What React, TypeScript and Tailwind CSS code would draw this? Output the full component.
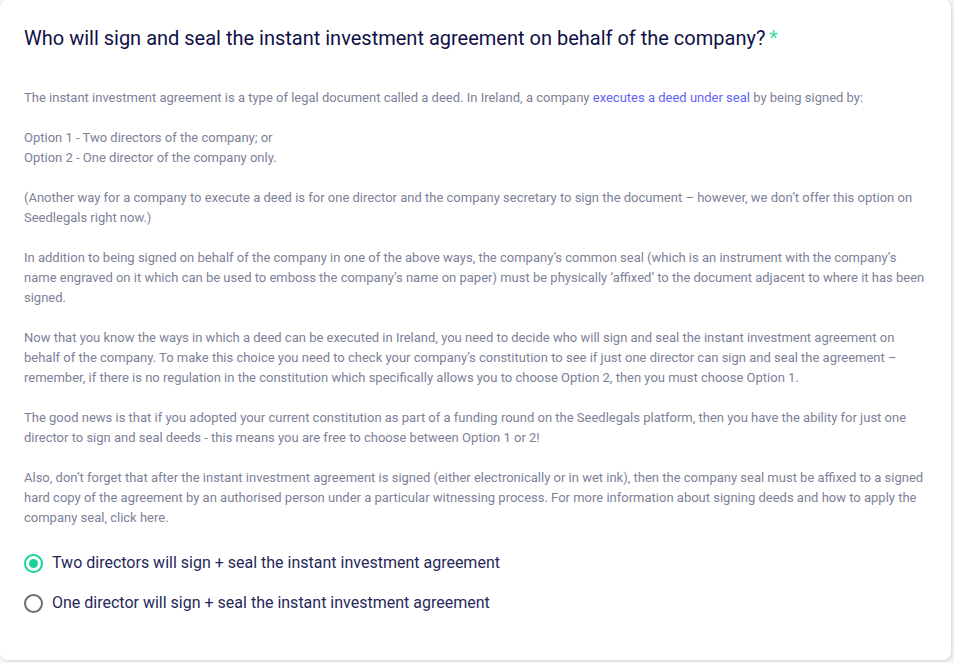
import React, { useState } from "react";

const options = [
  "Two directors will sign + seal the instant investment agreement",
  "One director will sign + seal the instant investment agreement",
];

export default function App() {
  const [selected, setSelected] = useState(0);

  return (
    <div className="min-h-screen bg-[#f4f4f6] font-['Roboto',sans-serif]">
      <div className="h-[660px] w-[951px] rounded-lg bg-white px-6 pt-[24px] shadow-[1px_1px_3px_rgba(0,0,0,0.12)]">
        <h1 className="text-[20px] leading-[28px] font-normal text-[#0f1147]">
          Who will sign and seal the instant investment agreement on behalf of the company?
          <span className="ml-1 text-[#3fdca0]">*</span>
        </h1>

        <div className="mt-[36px] text-[13px] leading-[20px] text-[#7d8199]">
          <p>
            The instant investment agreement is a type of legal document called a deed. In Ireland, a company{" "}
            <a className="text-[#6264f5]" href="#">
              executes a deed under seal
            </a>{" "}
            by being signed by:
          </p>
          <p className="mt-5">
            Option 1 - Two directors of the company; or
            <br />
            Option 2 - One director of the company only.
          </p>
          <p className="mt-5">
            (Another way for a company to execute a deed is for one director and the company secretary to sign the
            document – however, we don’t offer this option on Seedlegals right now.)
          </p>
          <p className="mt-5">
            In addition to being signed on behalf of the company in one of the above ways, the company’s common seal
            (which is an instrument with the company’s name engraved on it which can be used to emboss the company’s
            name on paper) must be physically ‘affixed’ to the document adjacent to where it has been signed.
          </p>
          <p className="mt-5">
            Now that you know the ways in which a deed can be executed in Ireland, you need to decide who will sign and
            seal the instant investment agreement on behalf of the company. To make this choice you need to check your
            company’s constitution to see if just one director can sign and seal the agreement – remember, if there is
            no regulation in the constitution which specifically allows you to choose Option 2, then you must choose
            Option 1.
          </p>
          <p className="mt-5">
            The good news is that if you adopted your current constitution as part of a funding round on the Seedlegals
            platform, then you have the ability for just one director to sign and seal deeds - this means you are free
            to choose between Option 1 or 2!
          </p>
          <p className="mt-5">
            Also, don’t forget that after the instant investment agreement is signed (either electronically or in wet
            ink), then the company seal must be affixed to a signed hard copy of the agreement by an authorised person
            under a particular witnessing process. For more information about signing deeds and how to apply the
            company seal, click here.
          </p>
        </div>

        <div className="mt-[23px] flex flex-col gap-4">
          {options.map((label, i) => (
            <label key={label} className="flex cursor-pointer items-center gap-[9px]" onClick={() => setSelected(i)}>
              <span
                className={
                  selected === i
                    ? "flex h-[19px] w-[19px] items-center justify-center rounded-full border-2 border-[#1dd19a]"
                    : "flex h-[19px] w-[19px] items-center justify-center rounded-full border-2 border-[#6e6e6e]"
                }
              >
                {selected === i && <span className="h-[9px] w-[9px] rounded-full bg-[#1dd19a]" />}
              </span>
              <span className="text-[16px] leading-[24px] text-[#26285a]">{label}</span>
            </label>
          ))}
        </div>
      </div>
    </div>
  );
}
